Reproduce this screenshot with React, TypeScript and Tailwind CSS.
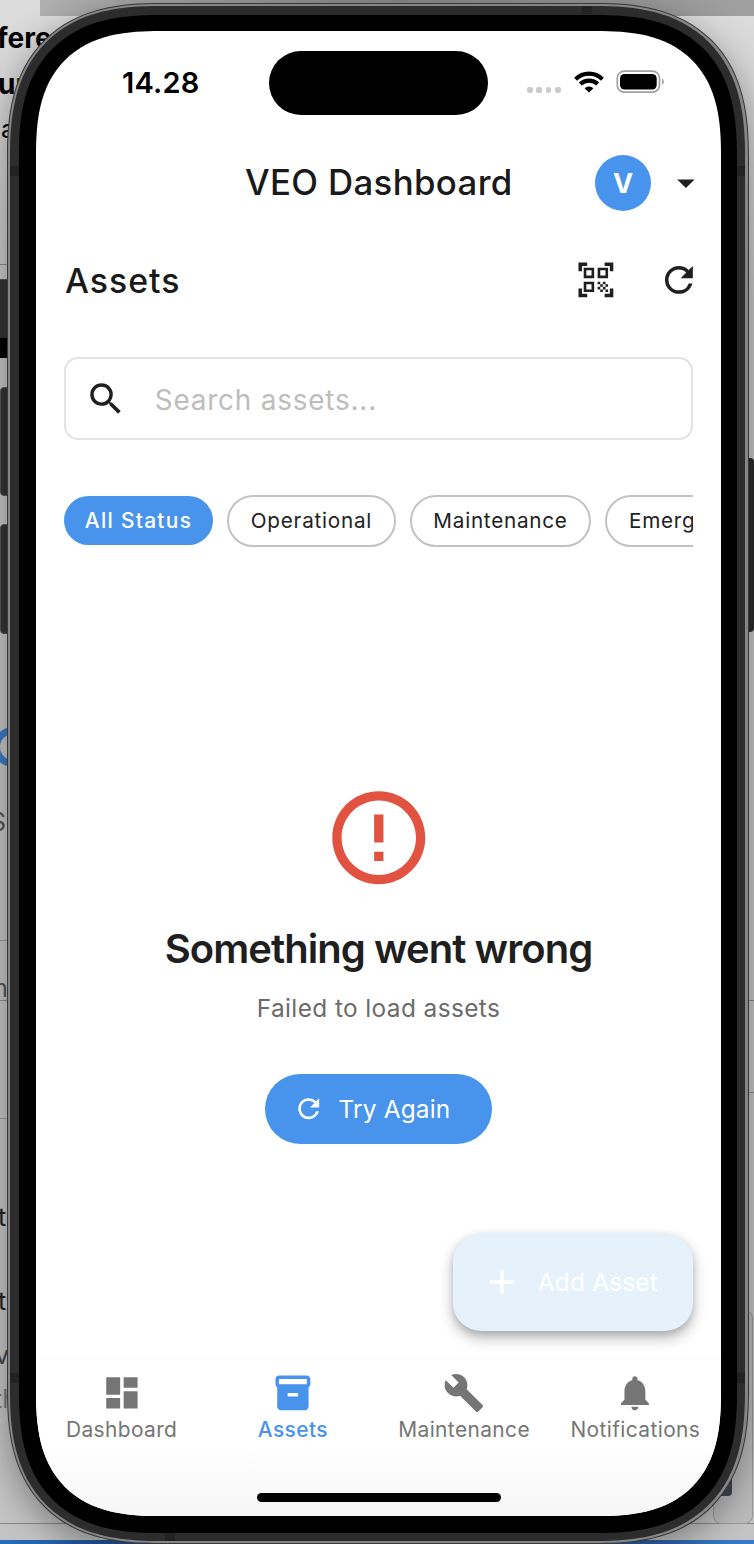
import type { ReactNode } from "react";
import {
  MdAdd,
  MdArrowDropDown,
  MdBuild,
  MdDashboard,
  MdErrorOutline,
  MdInventory2,
  MdNotifications,
  MdQrCodeScanner,
  MdRefresh,
  MdSearch,
} from "react-icons/md";

function StatusBar() {
  return (
    <div className="flex h-[105px] shrink-0 items-start">
      <div className="flex w-[233px] pl-[86px] pt-[30px]">
        <span className="text-[29px] font-semibold leading-[44px] tracking-[0.2px] text-black">14.28</span>
      </div>
      <div className="mt-5 h-16 w-[219px] rounded-full bg-black" />
      <div className="flex h-16 items-start pl-[39px] pt-[39px]">
        <div className="flex gap-[3.6px] pt-[17px]">
          {[0, 1, 2, 3].map((i) => (
            <span key={i} className="h-[6px] w-[5.7px] rounded-[2px] bg-[#cbcbcb]" />
          ))}
        </div>
        <svg className="ml-[13px] mt-px" width="30" height="22" viewBox="0 0 30 22">
          <g fill="none" stroke="#000" strokeWidth="4.2">
            <path d="M1.6 8.2a19 19 0 0 1 26.8 0" />
            <path d="M6.3 13.1a12.4 12.4 0 0 1 17.4 0" />
          </g>
          <path d="M15 21.4l-4.4-4.2a6.4 6.4 0 0 1 8.8 0z" fill="#000" />
        </svg>
        <svg className="ml-3" width="49" height="24" viewBox="0 0 49 24">
          <rect x="1.3" y="1.2" width="42.2" height="21" rx="7" fill="none" stroke="#a0a0a0" strokeWidth="1.7" />
          <rect x="4" y="4" width="36.7" height="15.6" rx="4.6" fill="#000" />
          <path d="M46 8.5v6.4c2.4-1.2 2.4-5.2 0-6.4z" fill="#a0a0a0" />
        </svg>
      </div>
    </div>
  );
}

function Chip({ children, active = false }: { children: ReactNode; active?: boolean }) {
  return (
    <div
      className={
        active
          ? "flex h-[49px] w-[149px] shrink-0 items-center justify-center rounded-full bg-[#4894ec] text-[20.9px] font-medium tracking-[1.3px] text-white"
          : "flex h-[52px] shrink-0 items-center rounded-full border-2 border-[#c2c2c2] px-[21.5px] text-[20.7px] tracking-[0.75px] text-[#222]"
      }
    >
      {children}
    </div>
  );
}

function NavItem({ icon, label, active = false }: { icon: ReactNode; label: string; active?: boolean }) {
  return (
    <div
      className={
        active
          ? "flex flex-1 flex-col items-center pt-[14px] font-medium text-[#4894ec]"
          : "flex flex-1 flex-col items-center pt-[14px] text-[#757575]"
      }
    >
      {icon}
      <span className="mt-[3px] text-[20.9px] leading-[28px] tracking-[0.4px]">{label}</span>
    </div>
  );
}

function Screen() {
  return (
    <div className="flex h-[1485px] w-[685px] flex-col overflow-hidden rounded-[103px] bg-white supports-[corner-shape:squircle]:rounded-[125px] supports-[corner-shape:squircle]:[corner-shape:superellipse(1.39)]">
      <StatusBar />
      <div className="flex h-[94px] shrink-0 items-center pl-[209px]">
        <h1 className="w-[272px] whitespace-nowrap pb-[2px] text-[34.8px] font-medium tracking-[0.35px] text-[#1a1a1a]">
          VEO Dashboard
        </h1>
        <div className="ml-[78px] flex size-14 items-center justify-center rounded-full bg-[#4894ec] pt-[2px] text-[27px] font-bold text-white">
          V
        </div>
        <MdArrowDropDown className="ml-[14px] text-[#1f1f1f]" size={41.8} />
      </div>
      <div className="flex h-[100px] shrink-0 items-center pl-[29px] pr-[21px]">
        <h2 className="flex-1 pt-[2px] text-[33.8px] font-medium tracking-[1px] text-[#1a1a1a]">Assets</h2>
        <MdQrCodeScanner className="text-[#1f1f1f]" size={41.8} />
        <MdRefresh className="ml-[41.8px] text-[#1f1f1f]" size={41.8} />
      </div>
      <div className="mx-7 mt-[27px] flex h-[83px] shrink-0 items-center rounded-[14px] border-2 border-[#e3e3e3]">
        <MdSearch className="ml-[19px] text-[#1f1f1f]" size={41.8} />
        <span className="ml-[28px] pt-[4px] text-[27.9px] tracking-[0.8px] text-[#bdbdbd]">Search assets...</span>
      </div>
      <div className="mx-7 mt-[54px] flex h-[53px] shrink-0 items-center gap-[14.3px] overflow-hidden">
        <Chip active>All Status</Chip>
        <Chip>Operational</Chip>
        <Chip>Maintenance</Chip>
        <Chip>Emergency</Chip>
      </div>
      <div className="flex shrink-0 flex-col items-center pt-[235px]">
        <MdErrorOutline className="text-[#e15241]" size={111.6} />
        <p className="mt-[27px] text-[40px] font-semibold leading-[56px] tracking-[-0.94px] text-[#1f1f1f]">
          Something went wrong
        </p>
        <p className="mt-[13px] text-[24.4px] leading-9 tracking-[0.4px] text-[#6b6b6b]">Failed to load assets</p>
        <button className="mt-[48px] flex h-[70px] w-[227px] items-center rounded-full bg-[#4894ec] pl-7 text-white">
          <MdRefresh size={31.4} />
          <span className="ml-[14px] pt-[2px] text-[24.4px] tracking-[0.2px]">Try Again</span>
        </button>
      </div>
      <div className="mr-7 mt-[89px] flex h-[98px] w-[240px] shrink-0 items-center self-end rounded-[28px] bg-[#e5f2fc] pl-7 text-white shadow-[0_7px_14px_rgba(0,0,0,0.28),0_3px_6px_rgba(0,0,0,0.1)]">
        <MdAdd size={41.8} />
        <span className="ml-[15px] pt-[2px] text-[24.4px] tracking-[0.2px]">Add Asset</span>
      </div>
      <nav className="mt-[26px] flex h-[159px] shrink-0 flex-col border-t border-[#fafafa] bg-linear-to-b from-white from-55% to-[#f6f6f6]">
        <div className="flex">
          <NavItem icon={<MdDashboard size={41.8} />} label="Dashboard" />
          <NavItem icon={<MdInventory2 size={41.8} />} label="Assets" active />
          <NavItem icon={<MdBuild size={41.8} />} label="Maintenance" />
          <NavItem icon={<MdNotifications size={41.8} />} label="Notifications" />
        </div>
        <div className="mt-[49px] h-[9px] w-[244px] self-center rounded-full bg-black" />
      </nav>
    </div>
  );
}

function Backdrop() {
  return (
    <div className="absolute inset-0 overflow-hidden bg-[#c4c4c4]">
      <div className="absolute inset-x-0 top-0 h-[300px] bg-linear-to-b from-[#dcdcdc] to-transparent" />
      <div className="absolute left-10 right-0 top-0 h-4 bg-linear-to-r from-[#b0b0b0] via-[#8a8a8a] to-[#a0a0a0]" />
      <span className="absolute -left-[3px] top-[17px] text-[28px] font-bold text-black">fere</span>
      <span className="absolute -left-[2px] top-[63px] text-[28px] font-bold text-black">ur</span>
      <span className="absolute left-[1px] top-[111px] text-[25px] text-black">a</span>
      <div className="absolute left-0 top-[264px] h-px w-10 bg-[#8c8c8c]" />
      <div className="absolute left-0 top-[279px] h-[79px] w-10 border-t border-[#555] bg-linear-to-b from-[#333] from-75% to-black to-75%" />
      <div className="absolute left-0 top-[387px] h-[109px] w-10 rounded border border-[#555] bg-[#333]" />
      <div className="absolute left-0 top-[524px] h-[110px] w-10 rounded border border-[#555] bg-[#333]" />
      <div className="absolute -left-[7px] top-[727px] h-[40px] w-[40px] rounded-full border-[7px] border-[#3a7ac4]" />
      <span className="absolute -left-[10px] top-[804px] text-[25px] text-[#555]">S</span>
      <div className="absolute left-0 top-[940px] h-px w-10 bg-[#999]" />
      <span className="absolute -left-[14px] top-[970px] text-[25px] text-[#555]">m</span>
      <div className="absolute left-0 top-[1000px] h-px w-10 bg-[#8c8c8c]" />
      <div className="absolute left-0 top-[1118px] h-px w-10 bg-[#999]" />
      <span className="absolute -left-[2px] top-[1199px] text-[25px] text-[#222]">t</span>
      <span className="absolute -left-[2px] top-[1283px] text-[25px] text-[#222]">t</span>
      <span className="absolute -left-[5px] top-[1337px] text-[25px] text-[#444]">v</span>
      <span className="absolute -left-[6px] top-[1381px] text-[25px] text-[#777]">th</span>
      <div className="absolute -left-2 top-[1440px] h-[84px] w-[762px] border-b border-[#888]" />
      <div className="absolute right-0 top-[458px] h-[174px] w-10 rounded bg-[#2c2c2c]" />
      <div className="absolute right-0 top-[1000px] h-px w-10 bg-[#888]" />
      <div className="absolute right-0 top-[1092px] h-px w-10 bg-[#888]" />
      <div className="absolute right-[1px] top-[1310px] h-[214px] w-10 rounded-lg border border-[#999] bg-[#bcbcbc]" />
      <div className="absolute right-[22px] top-[1470px] h-[26px] w-8 rounded bg-[#3f4854]" />
      <div className="absolute inset-x-0 bottom-0 h-[4px] bg-linear-to-r from-[#2a6cbd] via-[#102b50] to-[#3a7ccc]" />
    </div>
  );
}

export default function App() {
  return (
    <div className="relative h-[1544px] w-[754px] overflow-hidden font-['Inter',sans-serif]">
      <Backdrop />
      <div className="relative ml-[7px] mt-[3px] h-[1541px] w-[742px] rounded-[131px] bg-[#383838] p-px shadow-[0_10px_34px_rgba(0,0,0,0.36)] supports-[corner-shape:squircle]:rounded-[153px] supports-[corner-shape:squircle]:[corner-shape:superellipse(1.32)]">
        <div className="h-full w-full rounded-[130px] bg-[#858585] py-[2px] pl-[2px] pr-[3px] supports-[corner-shape:squircle]:rounded-[152px] supports-[corner-shape:squircle]:[corner-shape:superellipse(1.32)]">
          <div className="relative h-full w-full overflow-hidden rounded-[128px] bg-[#2c2c2c] pb-[8px] pl-[9px] pr-[8px] pt-[9px] supports-[corner-shape:squircle]:rounded-[150px] supports-[corner-shape:squircle]:[corner-shape:superellipse(1.33)]">
            <div className="absolute inset-x-0 top-[160px] h-[10px] bg-[#222]" />
            <div className="absolute inset-x-0 bottom-[158px] h-[10px] bg-[#222]" />
            <div className="absolute bottom-0 left-[155px] h-2 w-[10px] bg-[#222]" />
            <div className="absolute right-[153px] top-0 h-2 w-[10px] bg-[#222]" />
            <div className="relative h-full w-full rounded-[119px] bg-black py-4 pl-[17px] pr-4 supports-[corner-shape:squircle]:rounded-[141px] supports-[corner-shape:squircle]:[corner-shape:superellipse(1.35)]">
              <Screen />
            </div>
          </div>
        </div>
      </div>
    </div>
  );
}
